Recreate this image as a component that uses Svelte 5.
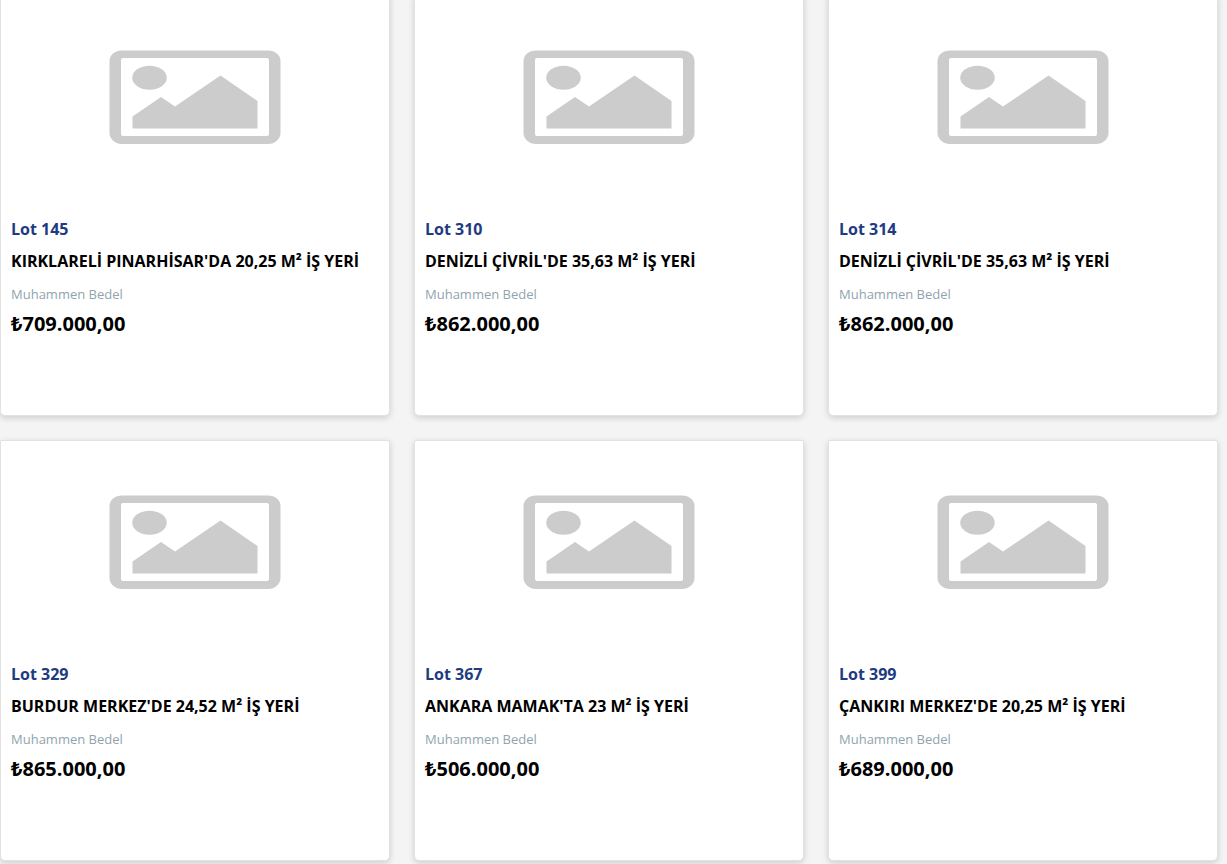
<script>
  const lots = [
    { no: 145, title: "KIRKLARELİ PINARHİSAR'DA 20,25 M² İŞ YERİ", price: '₺709.000,00' },
    { no: 310, title: "DENİZLİ ÇİVRİL'DE 35,63 M² İŞ YERİ", price: '₺862.000,00' },
    { no: 314, title: "DENİZLİ ÇİVRİL'DE 35,63 M² İŞ YERİ", price: '₺862.000,00' },
    { no: 329, title: "BURDUR MERKEZ'DE 24,52 M² İŞ YERİ", price: '₺865.000,00' },
    { no: 367, title: "ANKARA MAMAK'TA 23 M² İŞ YERİ", price: '₺506.000,00' },
    { no: 399, title: "ÇANKIRI MERKEZ'DE 20,25 M² İŞ YERİ", price: '₺689.000,00' }
  ];
</script>

<main>
  <div class="lots">
    {#each lots as lot}
      <article class="card">
        <div class="card-image">
          <!-- placeholder for lots without a photo -->
          <svg width="172" height="94" viewBox="0 0 172 94" aria-hidden="true">
            <path
              fill="#ccc"
              fill-rule="evenodd"
              d="M13 0.5H159C166 0.5 171.500 5 171.500 11V83C171.500 89 166 94 159 94H13C6 94 0.500 89 0.500 83V11C0.500 5 6 0.500 13 0.500ZM14 8Q12 8 12 10V84Q12 86 14 86H158Q160 86 160 84V10Q160 8 158 8Z"
            />
            <ellipse cx="40.500" cy="27.700" rx="17.300" ry="12" fill="#ccc" />
            <path fill="#ccc" d="M23.500 78.500V66.500L52 47L66 56.500L111.500 25.500L148.500 51V78.500Z" />
          </svg>
        </div>
        <div class="card-body">
          <div class="lot-no">Lot {lot.no}</div>
          <h2 class="title">{lot.title}</h2>
          <div class="label">Muhammen Bedel</div>
          <div class="price">{lot.price}</div>
        </div>
      </article>
    {/each}
  </div>
</main>

<style>
  :global(body) {
    margin: 0;
    background-color: #f4f4f4;
  }

  main {
    overflow: hidden;
    font-family: "Open Sans", "Noto Sans", sans-serif;
    color: #000;
  }

  .lots {
    display: grid;
    grid-template-columns: repeat(3, minmax(0, 1fr));
    gap: 24px;
    margin-top: -5px;
    padding: 0 9px 3px 0;
  }

  .card {
    background-color: #fff;
    border: 1px solid #e2e2e2;
    border-radius: 2px 2px 5px 5px;
    box-shadow: 0 2px 6px rgba(0, 0, 0, 0.16);
  }

  .card-image {
    display: flex;
    align-items: center;
    justify-content: center;
    height: 202px;
  }

  .card-body {
    padding: 19px 10px 76px;
  }

  .lot-no {
    font-size: 16px;
    font-weight: 700;
    line-height: 24px;
    color: #213b80;
  }

  .title {
    margin: 8px 0 11px;
    font-size: 16px;
    font-weight: 700;
    line-height: 24px;
  }

  .label {
    font-size: 13px;
    line-height: 20px;
    color: #90a4ae;
  }

  .price {
    margin-top: 5px;
    font-size: 20px;
    font-weight: 700;
    line-height: 30px;
  }
</style>
